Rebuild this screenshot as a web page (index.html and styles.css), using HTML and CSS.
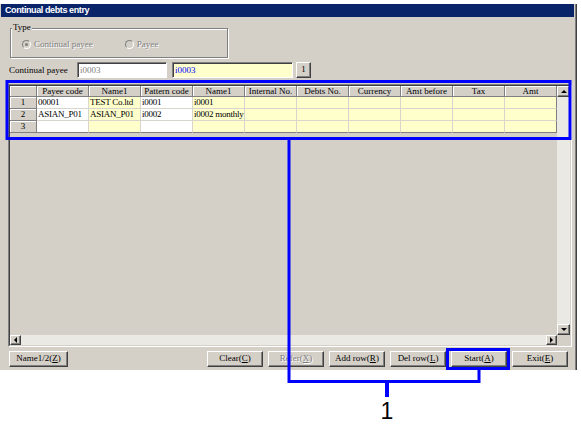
FILE: index.html
```html
<!DOCTYPE html>
<html>
<head>
<meta charset="utf-8">
<title>Continual debts entry</title>
<link rel="stylesheet" href="styles.css">
</head>
<body>
<div class="window">
  <div class="titlebar">Continual debts entry</div>
  <div class="client">
    <div class="groupbox">
      <span class="legend">Type</span>
      <div class="radios">
        <div class="radio disabled"><span class="dot checked"></span><span class="rlabel">Continual payee</span></div>
        <div class="radio disabled second"><span class="dot"></span><span class="rlabel">Payee</span></div>
      </div>
    </div>
    <div class="payee-row">
      <span class="label">Continual payee</span>
      <div class="field field-code">i0003</div>
      <div class="field field-name">i0003</div>
      <div class="btn btn-small">1</div>
    </div>
    <div class="grid-frame">
      <div class="grid-inner">
        <div class="grid-body">
          <table class="grid">
            <colgroup>
              <col class="c-rn"><col class="c"><col class="c"><col class="c"><col class="c"><col class="c"><col class="c"><col class="c"><col class="c"><col class="c"><col class="c">
            </colgroup>
            <thead>
              <tr><th></th><th>Payee code</th><th>Name1</th><th>Pattern code</th><th>Name1</th><th>Internal No.</th><th>Debts No.</th><th>Currency</th><th>Amt before</th><th>Tax</th><th>Amt</th></tr>
            </thead>
            <tbody>
              <tr><td class="rn">1</td><td class="w">00001</td><td class="y">TEST Co.ltd</td><td class="w">i0001</td><td class="y">i0001</td><td class="y"></td><td class="y"></td><td class="y"></td><td class="y"></td><td class="y"></td><td class="y"></td></tr>
              <tr><td class="rn">2</td><td class="w">ASIAN_P01</td><td class="y">ASIAN_P01</td><td class="w">i0002</td><td class="y">i0002 monthly</td><td class="y"></td><td class="y"></td><td class="y"></td><td class="y"></td><td class="y"></td><td class="y"></td></tr>
              <tr class="last"><td class="rn">3</td><td class="w"></td><td class="y"></td><td class="w"></td><td class="y"></td><td class="y"></td><td class="y"></td><td class="y"></td><td class="y"></td><td class="y"></td><td class="y"></td></tr>
            </tbody>
          </table>
        </div>
        <div class="vscroll">
          <div class="sb-btn"><span class="arrow up"></span></div>
          <div class="sb-track"></div>
          <div class="sb-btn"><span class="arrow down"></span></div>
        </div>
        <div class="hscroll">
          <div class="sb-btn sb-h"><span class="arrow left"></span></div>
          <div class="sb-track"></div>
          <div class="sb-btn sb-h"><span class="arrow right"></span></div>
        </div>
        <div class="corner"></div>
      </div>
    </div>
    <div class="button-bar">
      <div class="btn btn-name">Name1/2(<u>Z</u>)</div>
      <div class="btn-group">
        <div class="btn">Clear(<u>C</u>)</div>
        <div class="btn disabled">Refer(<u>X</u>)</div>
        <div class="btn">Add row(<u>R</u>)</div>
        <div class="btn">Del row(<u>L</u>)</div>
        <div class="btn">Start(<u>A</u>)</div>
        <div class="btn">Exit(<u>E</u>)</div>
      </div>
    </div>
  </div>
</div>
<svg class="annotation" width="581" height="428" viewBox="0 0 581 428">
  <rect x="7" y="81.5" width="563" height="57" fill="none" stroke="#0000ff" stroke-width="3"/>
  <rect x="447.5" y="349.5" width="61" height="19" fill="none" stroke="#0000ff" stroke-width="3"/>
  <polyline points="289,140 289,381.5 479,381.5 479,370" fill="none" stroke="#0000ff" stroke-width="3"/>
  <line x1="387" y1="381" x2="387" y2="397" stroke="#0000ff" stroke-width="4"/>
  <text x="387" y="419" class="callout" text-anchor="middle">1</text>
</svg>
</body>
</html>
```

FILE: styles.css
```css
* {
  box-sizing: border-box;
}

body {
  margin: 0;
  width: 581px;
  height: 428px;
  background: #ffffff;
  font-family: "Liberation Serif", "Times New Roman", serif;
  font-size: 9px;
  color: #000000;
  position: relative;
  overflow: hidden;
}

.window {
  margin-top: 4px;
  width: 577px;
  height: 366px;
  background: #d4d0c8;
  border-right: 1px solid #404040;
  box-shadow: inset -1px 0 #808080;
}

.titlebar {
  height: 13px;
  margin: 0 2px 0 1px;
  background: #0a246a;
  color: #ffffff;
  font-family: "Liberation Sans", Arial, sans-serif;
  font-weight: bold;
  font-size: 9px;
  letter-spacing: -0.4px;
  line-height: 13px;
  padding-left: 4px;
}

.client {
  padding: 0 7px 0 8px;
}

/* Type group */
.groupbox {
  position: relative;
  margin: 11px 0 0 2px;
  width: 218px;
  height: 30px;
  border: 1px solid #808080;
  box-shadow: inset 1px 1px #ffffff, 1px 1px #ffffff;
}

.legend {
  position: absolute;
  top: -7px;
  left: 1px;
  padding: 0 1px;
  background: #d4d0c8;
  line-height: 11px;
}

.radios {
  display: flex;
  align-items: center;
  padding: 10px 0 0 11px;
}

.radio {
  display: flex;
  align-items: center;
  gap: 3px;
}

.radio.second {
  margin-left: 32px;
}

.dot {
  width: 9px;
  height: 9px;
  border-radius: 50%;
  border: 1px solid #808080;
  border-right-color: #ffffff;
  border-bottom-color: #ffffff;
  background: #d4d0c8;
  display: flex;
  align-items: center;
  justify-content: center;
}

.dot.checked::after {
  content: "";
  width: 3px;
  height: 3px;
  border-radius: 50%;
  background: #808080;
}

.radio.disabled .rlabel {
  color: #808080;
  text-shadow: 1px 1px #ffffff;
}

/* Continual payee row */
.payee-row {
  display: flex;
  align-items: center;
  margin-top: 4px;
  height: 16px;
}

.label {
  width: 69px;
  padding-left: 1px;
}

.field {
  height: 16px;
  line-height: 12px;
  padding-left: 2px;
  border: 1px solid #808080;
  border-right-color: #ffffff;
  border-bottom-color: #ffffff;
  box-shadow: inset 1px 1px #404040;
  padding-top: 1px;
}

.field-code {
  width: 90px;
  margin-right: 5px;
  background: #ffffff;
  color: #808080;
}

.field-name {
  width: 121px;
  margin-right: 3px;
  background: #ffffcc;
  color: #0000ff;
}

/* Buttons */
.btn {
  height: 16px;
  width: 56px;
  background: #d4d0c8;
  border: 1px solid #ffffff;
  border-right-color: #404040;
  border-bottom-color: #404040;
  box-shadow: inset -1px -1px #808080;
  text-align: center;
  line-height: 13px;
  white-space: nowrap;
}

.btn-small {
  width: 15px;
}

.btn.disabled {
  color: #808080;
  text-shadow: 1px 1px #ffffff;
}

/* Grid */
.grid-frame {
  margin-top: 6px;
  width: 564px;
  border: 1px solid #808080;
  border-right-color: #ffffff;
  border-bottom-color: #ffffff;
}

.grid-inner {
  display: grid;
  grid-template-columns: 547px 13px;
  grid-template-rows: 249px 10px;
  border: 1px solid #404040;
  border-right-color: #d4d0c8;
  border-bottom-color: #d4d0c8;
}

.grid-body {
  overflow: hidden;
  background: #d4d0c8;
}

.grid {
  table-layout: fixed;
  border-collapse: separate;
  border-spacing: 0;
  width: 547px;
}

.c-rn {
  width: 27px;
}

.c {
  width: 52px;
}

.grid th,
.grid td.rn {
  height: 11px;
  padding: 0;
  font-weight: normal;
  text-align: center;
  background: #d4d0c8;
  border-right: 1px solid #808080;
  border-bottom: 1px solid #808080;
  box-shadow: inset 1px 1px #ffffff;
  line-height: 10px;
  white-space: nowrap;
  overflow: hidden;
}

.grid td {
  height: 12px;
  padding: 0 0 0 1px;
  line-height: 11px;
  letter-spacing: -0.25px;
  border-right: 1px solid #d8d5cc;
  border-bottom: 1px solid #d8d5cc;
  white-space: nowrap;
  overflow: hidden;
}

.grid td.rn {
  height: 12px;
  line-height: 11px;
  letter-spacing: 0;
}

.grid tr.last td {
  border-bottom-color: #808080;
}

.grid tr td:last-child {
  border-right-color: #808080;
}

.grid td.w {
  background: #ffffff;
}

.grid td.y {
  background: #ffffcc;
}

/* Scrollbars */
.vscroll {
  display: flex;
  flex-direction: column;
  background: #ebe9e4;
}

.hscroll {
  display: flex;
  background: #ebe9e4;
}

.sb-track {
  flex: 1;
}

.sb-btn {
  width: 13px;
  height: 11px;
  background: #d4d0c8;
  border: 1px solid #ffffff;
  border-right-color: #404040;
  border-bottom-color: #404040;
  box-shadow: inset -1px -1px #808080;
  display: flex;
  align-items: center;
  justify-content: center;
}

.sb-btn.sb-h {
  width: 11px;
  height: 10px;
}

.corner {
  background: #d4d0c8;
}

.arrow {
  width: 0;
  height: 0;
  border: 3px solid transparent;
}

.arrow.up {
  border-top-width: 0;
  border-bottom: 3px solid #000000;
}

.arrow.down {
  border-bottom-width: 0;
  border-top: 3px solid #000000;
}

.arrow.left {
  border-left-width: 0;
  border-right: 3px solid #000000;
}

.arrow.right {
  border-right-width: 0;
  border-left: 3px solid #000000;
}

/* Bottom buttons */
.button-bar {
  display: flex;
  justify-content: space-between;
  margin-top: 4px;
  padding-left: 1px;
}

.btn-name {
  width: 59px;
}

.btn-group {
  display: flex;
  gap: 5px;
  margin-right: 1px;
}

/* Annotation callout */
.annotation {
  position: absolute;
  top: 0;
  left: 0;
  pointer-events: none;
}

.callout {
  font-family: "Liberation Sans", Arial, sans-serif;
  font-size: 23px;
  fill: #000000;
}
```
